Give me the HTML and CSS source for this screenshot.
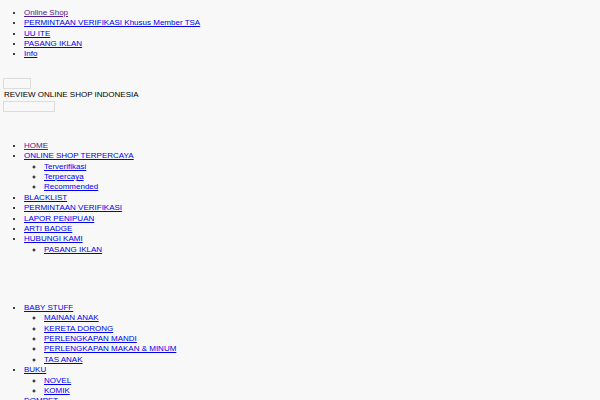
FILE: index.html
```html
<!DOCTYPE html>
<html>
<head>
<meta charset="utf-8">
<link rel="stylesheet" href="styles.css">
</head>
<body>
<ul class="list top-menu">
  <li><a class="visited" href="#">Online Shop</a></li>
  <li><a href="#">PERMINTAAN VERIFIKASI Khusus Member TSA</a></li>
  <li><a href="#">UU ITE</a></li>
  <li><a href="#">PASANG IKLAN</a></li>
  <li><a href="#">Info</a></li>
</ul>
<div class="header">
  <div class="box box-small"></div>
  <div class="site-title">REVIEW ONLINE SHOP INDONESIA</div>
  <div class="box box-wide"></div>
</div>
<ul class="list main-menu">
  <li><a class="visited" href="#">HOME</a></li>
  <li><a href="#">ONLINE SHOP TERPERCAYA</a>
    <ul class="list sub">
      <li><a href="#">Terverifikasi</a></li>
      <li><a href="#">Terpercaya</a></li>
      <li><a href="#">Recommended</a></li>
    </ul>
  </li>
  <li><a href="#">BLACKLIST</a></li>
  <li><a href="#">PERMINTAAN VERIFIKASI</a></li>
  <li><a href="#">LAPOR PENIPUAN</a></li>
  <li><a href="#">ARTI BADGE</a></li>
  <li><a href="#">HUBUNGI KAMI</a>
    <ul class="list sub">
      <li><a href="#">PASANG IKLAN</a></li>
    </ul>
  </li>
</ul>
<ul class="list cat-menu">
  <li><a href="#">BABY STUFF</a>
    <ul class="list sub">
      <li><a href="#">MAINAN ANAK</a></li>
      <li><a href="#">KERETA DORONG</a></li>
      <li><a href="#">PERLENGKAPAN MANDI</a></li>
      <li><a href="#">PERLENGKAPAN MAKAN &amp; MINUM</a></li>
      <li><a href="#">TAS ANAK</a></li>
    </ul>
  </li>
  <li><a href="#">BUKU</a>
    <ul class="list sub">
      <li><a href="#">NOVEL</a></li>
      <li><a href="#">KOMIK</a></li>
    </ul>
  </li>
  <li><a href="#">DOMPET</a></li>
  <li><a href="#">ELEKTRONIK</a></li>
</ul>
</body>
</html>
```
FILE: styles.css
```css
html, body {
  margin: 0;
  padding: 0;
  background: #f8f8f8;
}
body {
  font-family: "Liberation Sans", Arial, sans-serif;
  font-size: 8px;
  line-height: 10.4px;
  color: #000;
}
.list {
  margin: 0;
  padding: 0 0 0 24px;
  list-style: disc;
}
.list .sub {
  padding-left: 20px;
  list-style: circle;
}
a {
  color: #0000ee;
  text-decoration: underline;
}
a.visited {
  color: #551a8b;
}
.top-menu {
  margin-top: 7.8px;
}
.header {
  margin-top: 18px;
  padding-left: 3px;
}
.box {
  height: 9px;
  border: 1px solid #dcdcdc;
  background: #f8f8f8;
}
.box-small {
  width: 26px;
}
.box-wide {
  width: 50px;
  margin-top: 1px;
}
.site-title {
  padding-left: 1px;
  line-height: 11px;
}
.main-menu {
  margin-top: 29px;
}
.cat-menu {
  margin-top: 47.5px;
}
```
